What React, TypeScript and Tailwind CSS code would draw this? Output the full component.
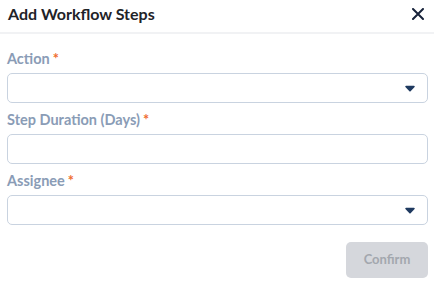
import React from "react";

function Caret() {
  return (
    <svg width="10" height="7" viewBox="0 0 10 7" className="shrink-0">
      <path d="M1 0.8 H9 a0.8 0.8 0 0 1 0.6 1.3 L5.6 6.2 a0.8 0.8 0 0 1 -1.2 0 L0.4 2.1 A0.8 0.8 0 0 1 1 0.8 Z" fill="#1f3a60" />
    </svg>
  );
}

function Label({ text }: { text: string }) {
  return (
    <div className="h-[20px] flex items-center text-[14.5px] font-bold text-[#8a9cb6] leading-[20px]">
      <span>{text}</span>
      <span className="ml-[3px] text-[#ef6c2f]">*</span>
    </div>
  );
}

export default function App() {
  return (
    <div
      className="w-[434px] h-[284px] bg-white overflow-hidden"
      style={{ fontFamily: "Lato, 'Noto Sans', sans-serif" }}
    >
      <div className="flex items-center justify-between pl-[8px] pr-[10px] pt-[4px] pb-[9px] border-b-2 border-[#f1f2f4]">
        <div className="text-[16px] leading-[19px] font-bold text-[#1f2328]">Add Workflow Steps</div>
        <svg width="12" height="12" viewBox="0 0 12 12" className="mt-[1px]">
          <path d="M1 1 L11 11 M11 1 L1 11" stroke="#17223a" strokeWidth="2" strokeLinecap="round" />
        </svg>
      </div>
      <div className="pl-[7px] pr-[6px] pt-[15px] flex flex-col">
        <Label text="Action" />
        <div className="mt-[4px] h-[30px] rounded-[5px] border border-[#c9d3e0] flex items-center justify-end pr-[12px]">
          <Caret />
        </div>
        <div className="mt-[7px]">
          <Label text="Step Duration (Days)" />
        </div>
        <div className="mt-[4px] h-[30px] rounded-[5px] border border-[#c9d3e0]" />
        <div className="mt-[7px]">
          <Label text="Assignee" />
        </div>
        <div className="mt-[4px] h-[30px] rounded-[5px] border border-[#c9d3e0] flex items-center justify-end pr-[12px]">
          <Caret />
        </div>
        <div className="flex justify-end mt-[17px]">
          <button className="w-[82px] h-[36px] rounded-[5px] bg-[#d5d7dc] text-[#a3a7ae] text-[13px] font-bold">
            Confirm
          </button>
        </div>
      </div>
    </div>
  );
}
